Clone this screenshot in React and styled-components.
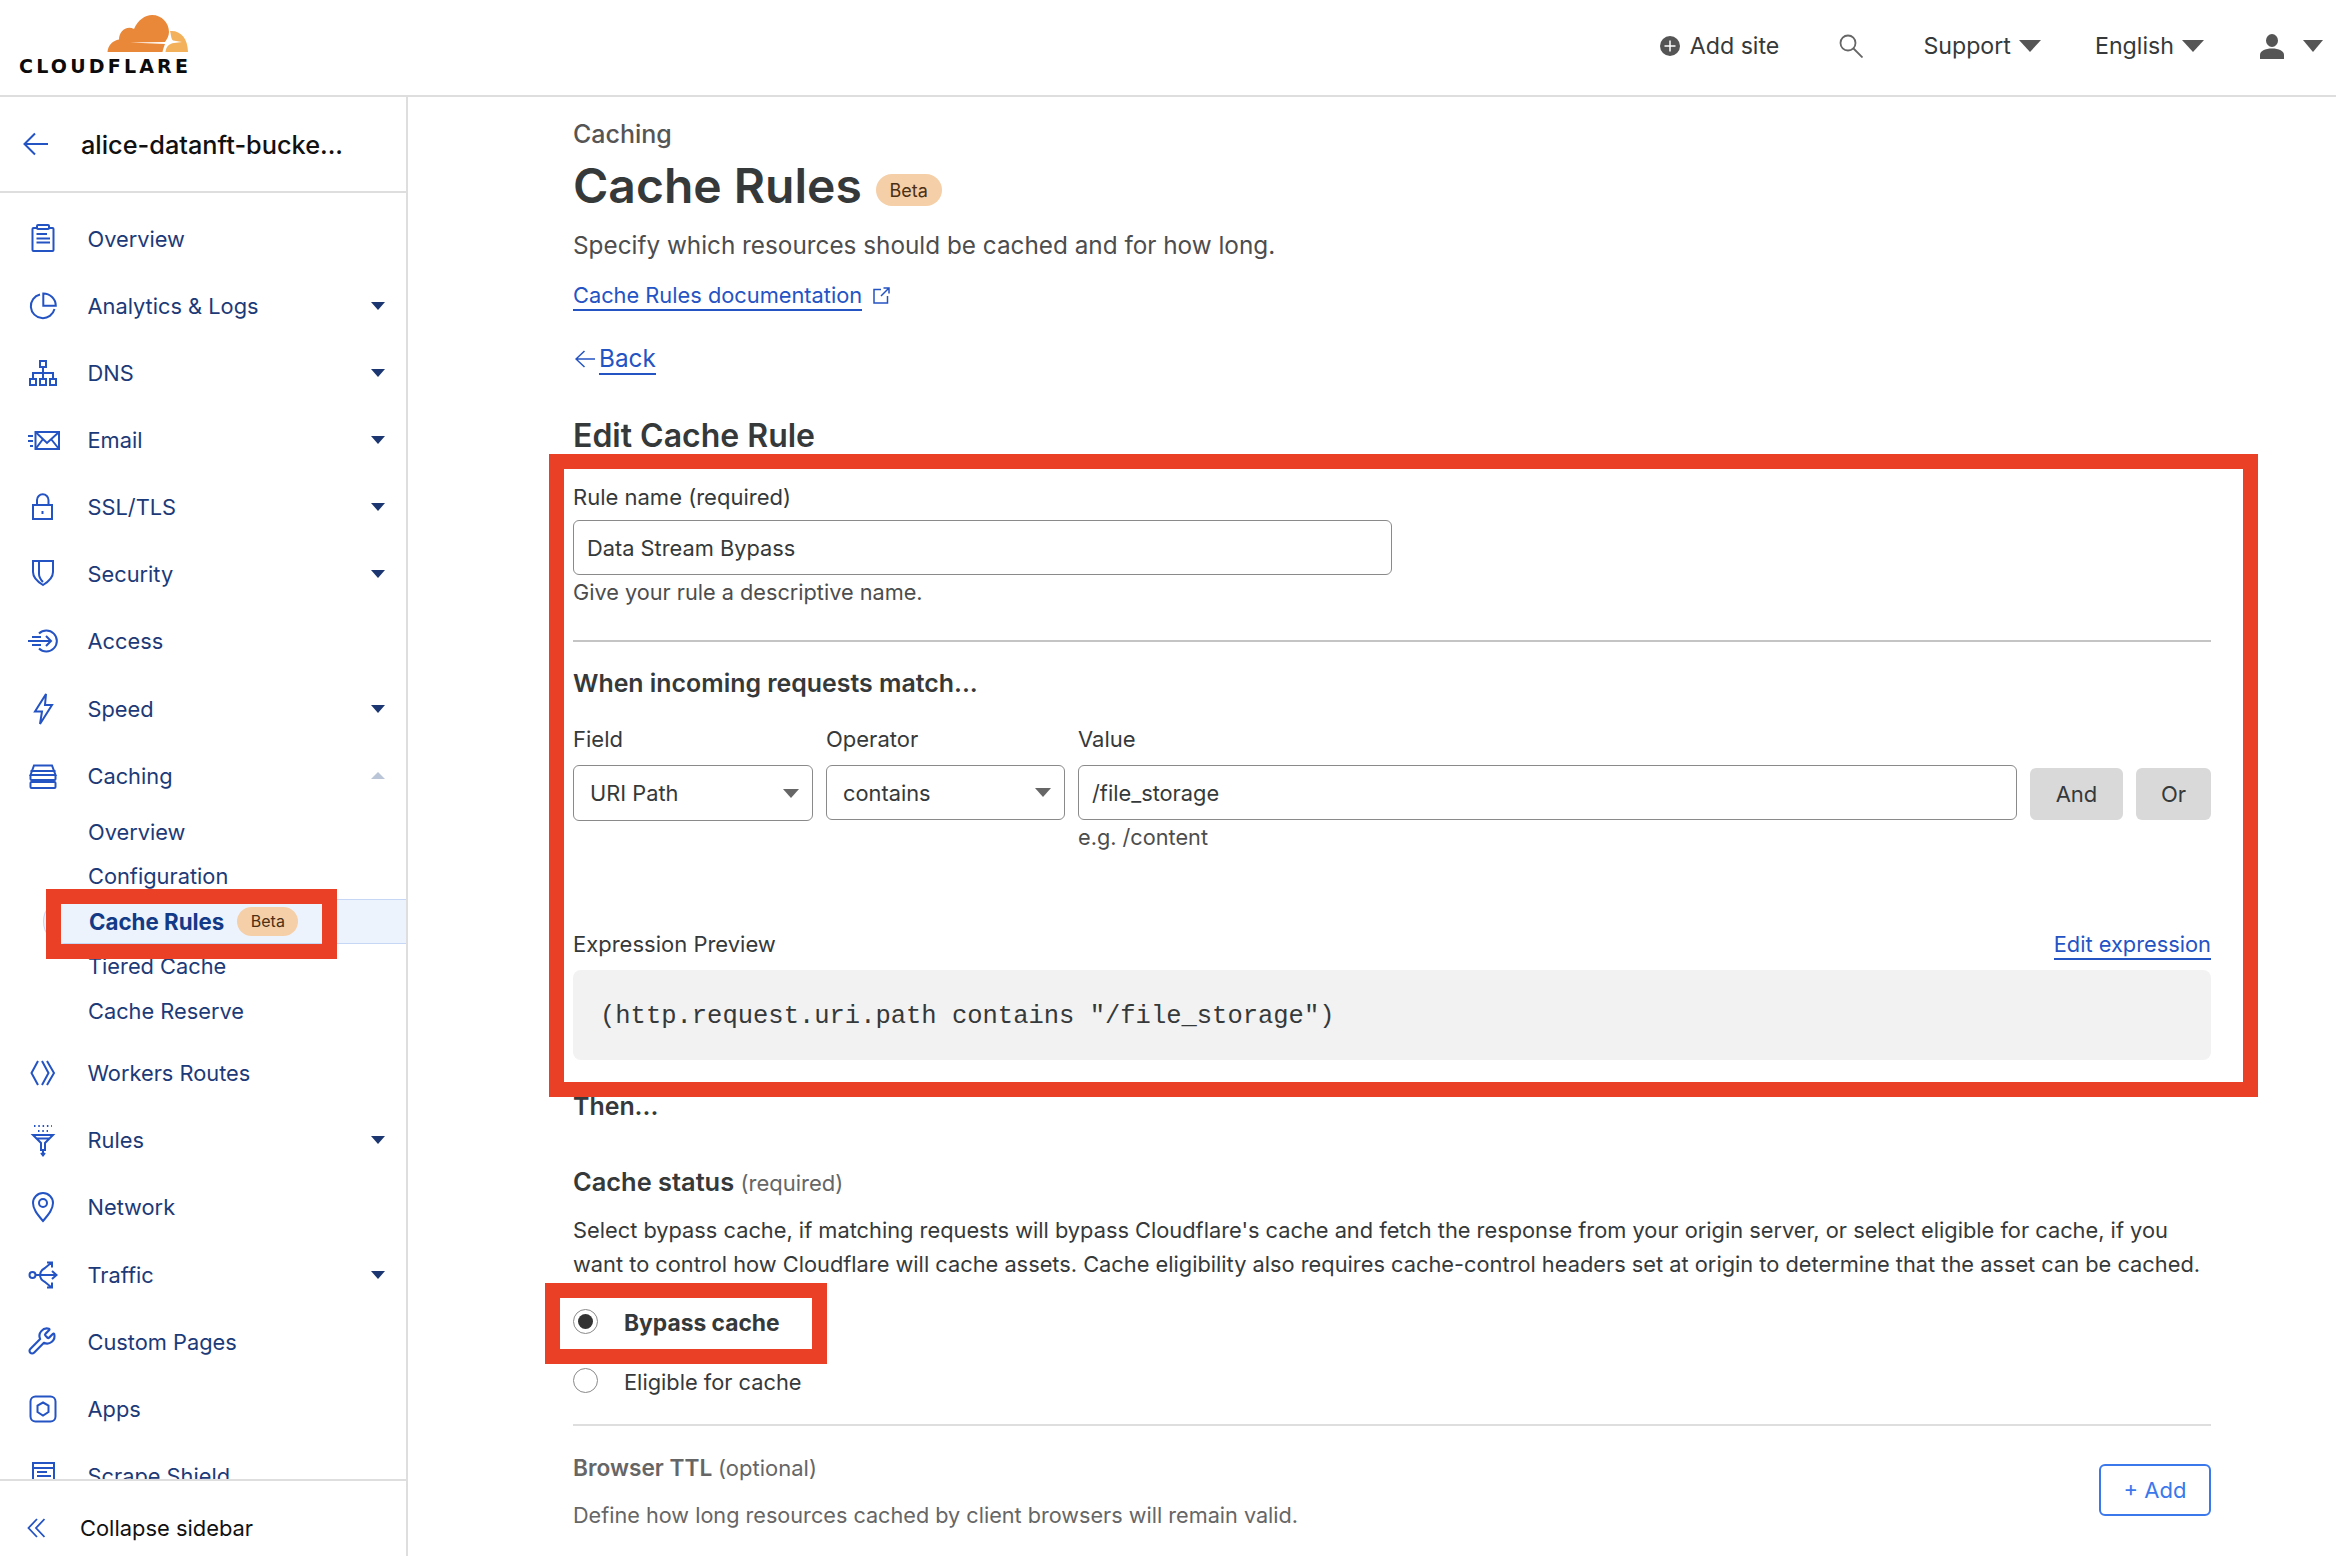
import React from "react";
import styled, { createGlobalStyle } from "styled-components";
import { Wrench } from "lucide-react";

const GlobalStyle = createGlobalStyle`
  * { box-sizing: border-box; }
  html, body { margin: 0; padding: 0; background: #fff; }
  body {
    font-family: Inter, "Noto Sans", sans-serif;
    color: #36393a;
    overflow: hidden;
  }
`;

const Page = styled.div`
  position: relative;
  width: 2336px;
  height: 1556px;
  overflow: hidden;
`;

/* top bar */
const TopBar = styled.header`
  height: 97px;
  display: flex;
  align-items: center;
  justify-content: space-between;
  border-bottom: 2px solid #dedede;
  padding: 0 13px 0 19px;
`;

const Logo = styled.div`
  width: 170px;
  display: flex;
  flex-direction: column;
  align-items: flex-end;
  margin-top: -5px;
`;

const LogoText = styled.span`
  font-family: "DejaVu Sans", sans-serif;
  font-weight: 700;
  font-size: 19px;
  line-height: 18px;
  letter-spacing: 3.2px;
  color: #0b0b0b;
  margin-top: 4px;
  white-space: nowrap;
  align-self: flex-start;
`;

const TopActions = styled.div`
  display: flex;
  align-items: center;
  font-size: 23.2px;
  color: #36393a;
  margin-top: -3px;
`;

const TopItem = styled.div`
  display: flex;
  align-items: center;
  gap: ${p => p.$gap || 8}px;
  margin-left: ${p => p.$left || 0}px;
`;

const Caret = styled.span`
  display: inline-block;
  width: 0;
  height: 0;
  flex: none;
  border-left: ${p => p.$w / 2}px solid transparent;
  border-right: ${p => p.$w / 2}px solid transparent;
  border-top: ${p => (p.$up ? 0 : p.$h + "px solid " + p.$color)};
  border-bottom: ${p => (p.$up ? p.$h + "px solid " + p.$color : 0)};
`;

/* layout */
const Body = styled.div`
  display: flex;
  height: 1459px;
`;

const Sidebar = styled.aside`
  width: 408px;
  flex: none;
  display: flex;
  flex-direction: column;
  border-right: 2px solid #dedede;
`;

const SiteRow = styled.div`
  height: 96px;
  flex: none;
  display: flex;
  align-items: center;
  gap: 32px;
  padding-left: 23px;
  border-bottom: 2px solid #dedede;
  font-size: 25.3px;
  font-weight: 500;
  color: #111;
`;

const Nav = styled.nav`
  flex: 1;
  min-height: 0;
  overflow: hidden;
  padding-top: 12px;
`;

const NavRow = styled.div`
  height: 67.15px;
  display: flex;
  align-items: center;
  padding: 0 21px 0 27px;
  margin-top: ${p => p.$top || 0}px;
  color: #1d3a78;
  font-size: 21.8px;
`;

const IconSlot = styled.span`
  width: 32px;
  height: 32px;
  flex: none;
  margin-right: 28.500px;
  color: #2453c4;
  display: flex;
  svg { overflow: visible; display: block; }
`;

const NavLabel = styled.span`
  flex: 1;
`;

const SubRow = styled.div`
  height: 44.8px;
  display: flex;
  align-items: center;
  padding-left: 88px;
  color: #1d3a78;
  font-size: 21.8px;
`;

const ActiveSubRow = styled(SubRow)`
  margin-left: 43px;
  padding-left: 45px;
  gap: 13px;
  font-size: 22.3px;
  font-weight: 700;
  color: #123a86;
  background: #edf3fd;
  border: 1px solid #c6d7f5;
  border-right: 0;
  border-radius: 22px 0 0 22px;
`;

const CollapseRow = styled.div`
  height: 77px;
  flex: none;
  display: flex;
  align-items: center;
  gap: 35px;
  padding: 19px 0 0 27px;
  border-top: 2px solid #dedede;
  font-size: 21.9px;
  color: #111;
`;

const Badge = styled.span`
  display: inline-flex;
  align-items: center;
  justify-content: center;
  background: #f5cfa8;
  color: #4c3016;
  border-radius: 16px;
  font-weight: 400;
  width: ${p => p.$w}px;
  height: ${p => p.$h}px;
  font-size: ${p => p.$size}px;
`;

/* main column */
const Main = styled.main`
  flex: 1;
  min-width: 0;
  padding: 21px 125px 0 165px;
`;

const Crumb = styled.div`
  font-size: 25px;
  line-height: 32px;
  font-weight: 500;
  color: #555;
`;

const TitleRow = styled.div`
  height: 60px;
  margin-top: 5px;
  display: flex;
  align-items: center;
  gap: 14px;
`;

const Title = styled.h1`
  margin: 1px 0 0;
  font-size: 48px;
  line-height: 60px;
  font-weight: 600;
  color: #36393a;
`;

const TitleBadge = styled(Badge)`
  margin-top: 10px;
`;

const Lead = styled.p`
  margin: 12px 0 0;
  font-size: 24.3px;
  line-height: 36px;
  color: #4d4d4d;
`;

const DocRow = styled.div`
  margin-top: 18px;
  height: 31px;
  display: flex;
  align-items: flex-start;
  gap: 11px;
  color: #2453c4;
`;

const TextLink = styled.a`
  display: inline-block;
  color: #2453c4;
  text-decoration: none;
  border-bottom: 2px solid #2453c4;
  font-size: 21.8px;
  line-height: 28px;
`;

const BackRow = styled.div`
  margin-top: 31px;
  height: 32px;
  display: flex;
  align-items: flex-start;
  gap: 4px;
  color: #2453c4;
  padding-left: 2px;
  svg { margin-top: 7px; }
`;

const BackLink = styled(TextLink)`
  font-size: 24.3px;
  line-height: 30px;
`;

const SectionTitle = styled.h2`
  margin: 41px 0 0;
  font-size: 32px;
  line-height: 40px;
  font-weight: 600;
  color: #36393a;
`;

const FieldLabel = styled.div`
  font-size: 22px;
  line-height: 28px;
  color: #36393a;
`;

const RuleLabel = styled(FieldLabel)`
  margin-top: 27px;
`;

const TextBox = styled.div`
  display: flex;
  align-items: center;
  border: 1.5px solid #8a8a8a;
  border-radius: 6px;
  background: #fff;
  font-size: 21.8px;
  color: #36393a;
  padding: 0 13px;
  height: ${p => p.$h || 55}px;
`;

const RuleInput = styled(TextBox)`
  width: 819px;
  margin-top: 9px;
`;

const Hint = styled.div`
  margin-top: 3px;
  font-size: 21.7px;
  line-height: 28px;
  color: #4d4d4d;
`;

const Divider = styled.hr`
  margin: ${p => p.$top}px 0 0;
  border: 0;
  height: 2px;
  background: ${p => p.$color || "#dedede"};
`;

const SubHeading = styled.h3`
  margin: ${p => p.$top}px 0 0;
  font-size: 24.9px;
  line-height: 32px;
  font-weight: 600;
  color: #36393a;
`;

const MatchGrid = styled.div`
  margin-top: 26px;
  display: grid;
  grid-template-columns: 240px 239px 939px 93px 75px;
  column-gap: 13px;
  align-items: start;
`;

const MatchCell = styled.div`
  display: flex;
  flex-direction: column;
  gap: 12px;
`;

const ButtonCell = styled.div`
  padding-top: 43px;
`;

const SelectBox = styled(TextBox)`
  justify-content: space-between;
  padding: 0 13px 0 16px;
`;

const ValueHint = styled(Hint)`
  margin-top: -9px;
`;

const GrayButton = styled.button`
  width: 100%;
  height: 52px;
  border: 0;
  border-radius: 6px;
  background: #d9d9d9;
  color: #36393a;
  font-family: inherit;
  font-size: 22px;
`;

const PreviewHead = styled.div`
  margin-top: 79px;
  display: flex;
  justify-content: space-between;
  align-items: flex-start;
`;

const CodeBlock = styled.pre`
  margin: 10px 0 0;
  height: 90px;
  display: flex;
  align-items: center;
  padding: 3px 0 0 27px;
  background: #f2f2f2;
  border-radius: 8px;
  font-family: "Liberation Mono", monospace;
  font-size: 25.5px;
  color: #36393a;
`;

const StatusTitle = styled.div`
  margin-top: 44px;
  line-height: 32px;
  font-size: 25.4px;
  font-weight: 600;
  color: #36393a;
  small {
    font-size: 22px;
    font-weight: 400;
    color: #666;
  }
`;

const Para = styled.p`
  margin: 14px 0 0;
  font-size: 21.8px;
  line-height: 34px;
  white-space: nowrap;
  color: #36393a;
`;

const RadioRow = styled.label`
  height: 25px;
  margin-top: ${p => p.$top}px;
  display: flex;
  align-items: center;
  gap: 26px;
  font-size: ${p => (p.$on ? 22.8 : 21.8)}px;
  font-weight: ${p => (p.$on ? 700 : 400)};
  color: #36393a;
`;

const RadioDot = styled.span`
  width: 25px;
  height: 25px;
  flex: none;
  border-radius: 50%;
  border: 1.5px solid #8a8a8a;
  display: flex;
  align-items: center;
  justify-content: center;
  &::after {
    content: "";
    width: 15px;
    height: 15px;
    border-radius: 50%;
    background: ${p => (p.$on ? "#333" : "transparent")};
  }
`;

const RadioText = styled.span`
  margin-top: 2px;
`;

const TtlRow = styled.div`
  margin-top: 28px;
  display: flex;
  justify-content: space-between;
  align-items: flex-start;
`;

const TtlTitle = styled.div`
  font-size: 22.7px;
  line-height: 28px;
  font-weight: 600;
  color: #666;
  small {
    font-size: 22px;
    font-weight: 400;
  }
`;

const TtlText = styled.div`
  margin-top: 19px;
  font-size: 21.65px;
  line-height: 28px;
  color: #666;
`;

const OutlineButton = styled.button`
  width: 112px;
  height: 52px;
  margin-top: 10px;
  background: #fff;
  border: 2px solid #3a78ec;
  border-radius: 6px;
  color: #3a78ec;
  font-family: inherit;
  font-size: 22px;
`;

/* red annotation frames drawn over the page */
const Highlight = styled.div`
  position: absolute;
  left: ${p => p.$x}px;
  top: ${p => p.$y}px;
  width: ${p => p.$w}px;
  height: ${p => p.$h}px;
  border: 15px solid #ea4026;
  pointer-events: none;
`;

const CloudLogo = () => (
  <svg width="82" height="38" viewBox="106 14 82 38">
    <path
      fill="#ea883a"
      d="M106.500 51C107 44 112 39.500 118 38.500C118 31 125 24 133 28C137 19 144 14 151 14C161 14 168 22 168 31C168 35 166 38 164 41L129 41.500L164 43C163 46 162 48 161.500 51Z"
    />
    <path
      fill="#f3b15c"
      d="M164.500 51C165 46 168 42.500 173 42L181 41L172 39.500C170 38 170 33 169 30C179 29 187 37 187 51Z"
    />
  </svg>
);

const iconPaths = {
  overview: (
    <>
      <rect x="5.500" y="5" width="21" height="23" rx="1" />
      <rect x="10" y="2" width="12" height="4" rx="1" fill="#fff" />
      <path d="M9.500 11H20M9.500 15.500H23M9.500 19.500H23" />
    </>
  ),
  analytics: (
    <>
      <path d="M13 4.500A12 12 0 1 0 27.500 19" />
      <path d="M16.300 3.500A12.500 12.500 0 0 1 28.800 15.700H16.300Z" />
    </>
  ),
  dns: (
    <>
      <rect x="13" y="4" width="6" height="6" />
      <path d="M16 10V22M6 22V16H26V22" />
      <rect x="3" y="22" width="6" height="6" />
      <rect x="13" y="22" width="6" height="6" />
      <rect x="23" y="22" width="6" height="6" />
    </>
  ),
  email: (
    <>
      <rect x="8.500" y="8" width="23.500" height="17" />
      <path d="M8.500 8L20 19L32 8M8.500 25L16 15M32 25L24 15M1 12H6M1 17H6M3 22H6" />
    </>
  ),
  lock: (
    <>
      <rect x="6" y="14" width="19" height="14" />
      <path d="M10 14V9A5.700 5.700 0 0 1 21.500 9V14M15.500 20V23" />
    </>
  ),
  shield: (
    <>
      <path d="M6 3H26V14C26 20 21 24 16 27C11 24 6 20 6 14Z" />
      <path d="M12 3V16C12 20 14 22 16 24" />
    </>
  ),
  access: (
    <>
      <path d="M12 8.500A10.500 10.500 0 1 1 12 23.500" />
      <path d="M1 16H24M19 11L24 16L19 21M5 12H14M5 20H14" />
    </>
  ),
  speed: <path d="M19 1L8 18.500H15L13 31L25 12H18Z" />,
  caching: (
    <>
      <path d="M3.500 15L7 5.500H25L28.500 15Z" />
      <path d="M3.500 11H28.500" />
      <rect x="3.500" y="15" width="25" height="5" rx="1" />
      <rect x="3.500" y="22" width="25" height="6" rx="1" />
    </>
  ),
  workers: <path d="M11 4L4.500 16L11 28M15 4L21.500 16L15 28M20 4L27 16L20 28" />,
  rules: (
    <>
      <path d="M7 2H25M11 7H21" strokeDasharray="1.500 2.800" />
      <path d="M6 11H26L18 19V26H14V19ZM10 14.500H22M16 26V31M14 29L16 31.500L18 29" />
    </>
  ),
  network: (
    <>
      <path d="M16 30C10 23 6 18 6 12A10 10 0 0 1 26 12C26 18 22 23 16 30Z" />
      <circle cx="16" cy="12" r="4" />
    </>
  ),
  traffic: (
    <>
      <circle cx="5.500" cy="16" r="3" />
      <path d="M8.500 16H29M25 12L29.500 16L25 20M13 16C13 12 16 10 18 9L24 4M20 3.500H25V8.500M13 16C13 20 16 22 18 23L24 28M20 28.500H25V23.500" />
    </>
  ),
  apps: (
    <>
      <rect x="3.500" y="3.500" width="25" height="25" rx="5" />
      <path d="M16 9.500L21.500 12.500V19L16 22.500L10.500 19V12.500Z" />
    </>
  ),
  scrape: (
    <>
      <rect x="6" y="3" width="21" height="26" />
      <path d="M6 8H27M10 12H20M10 16H24M10 20H24" />
    </>
  ),
};

const NavIcon = ({ name }) => (
  <IconSlot>
    {name === "wrench" ? (
      <Wrench size={30} strokeWidth={1.7} />
    ) : (
      <svg width="32" height="32" viewBox="0 0 32 32" fill="none" stroke="currentColor" strokeWidth="2">
        {iconPaths[name]}
      </svg>
    )}
  </IconSlot>
);

const NavItem = ({ icon, label, caret, up, top }) => (
  <NavRow $top={top}>
    <NavIcon name={icon} />
    <NavLabel>{label}</NavLabel>
    {caret && <Caret $w={14} $h={up ? 7 : 8} $up={up} $color={up ? "#bac5d8" : "#1b3670"} />}
  </NavRow>
);

const navTop = [
  { icon: "overview", label: "Overview" },
  { icon: "analytics", label: "Analytics & Logs", caret: true },
  { icon: "dns", label: "DNS", caret: true },
  { icon: "email", label: "Email", caret: true },
  { icon: "lock", label: "SSL/TLS", caret: true },
  { icon: "shield", label: "Security", caret: true },
  { icon: "access", label: "Access" },
  { icon: "speed", label: "Speed", caret: true },
  { icon: "caching", label: "Caching", caret: true, up: true },
];

const navBottom = [
  { icon: "rules", label: "Rules", caret: true },
  { icon: "network", label: "Network" },
  { icon: "traffic", label: "Traffic", caret: true },
  { icon: "wrench", label: "Custom Pages" },
  { icon: "apps", label: "Apps" },
  { icon: "scrape", label: "Scrape Shield" },
];

const App = () => (
  <Page>
    <GlobalStyle />
    <TopBar>
      <Logo>
        <CloudLogo />
        <LogoText>CLOUDFLARE</LogoText>
      </Logo>
      <TopActions>
        <TopItem $gap={10}>
          <svg width="20" height="20" viewBox="0 0 20 20">
            <circle cx="10" cy="10" r="10" fill="#555" />
            <path d="M10 4.500V15.500M4.500 10H15.500" stroke="#fff" strokeWidth="1.500" />
          </svg>
          Add site
        </TopItem>
        <TopItem $left={60}>
          <svg width="24" height="24" viewBox="0 0 24 24" fill="none" stroke="#666" strokeWidth="1.800">
            <circle cx="9" cy="9" r="7.500" />
            <path d="M14.500 14.500L23.500 23.500" />
          </svg>
        </TopItem>
        <TopItem $left={60}>
          Support
          <Caret $w={23} $h={12} $color="#555" />
        </TopItem>
        <TopItem $left={54}>
          English
          <Caret $w={22} $h={12} $color="#555" />
        </TopItem>
        <TopItem $left={56} $gap={19}>
          <svg width="24" height="25" viewBox="0 0 24 25" fill="#555">
            <ellipse cx="12" cy="6.500" rx="6" ry="6.500" />
            <path d="M0 25V21C0 17 5 14.500 12 14.500C19 14.500 24 17 24 21V25Z" />
          </svg>
          <Caret $w={21} $h={12} $color="#555" />
        </TopItem>
      </TopActions>
    </TopBar>

    <Body>
      <Sidebar>
        <SiteRow>
          <svg width="26" height="24" viewBox="0 0 26 24" fill="none" stroke="#2453c4" strokeWidth="2">
            <path d="M25 12H2M12 1.500L1.500 12L12 22.500" />
          </svg>
          alice-datanft-bucke...
        </SiteRow>
        <Nav>
          {navTop.map(item => (
            <NavItem key={item.label} {...item} />
          ))}
          <SubRow>Overview</SubRow>
          <SubRow>Configuration</SubRow>
          <ActiveSubRow>
            Cache Rules
            <Badge $w={61} $h={29} $size={16}>
              Beta
            </Badge>
          </ActiveSubRow>
          <SubRow>Tiered Cache</SubRow>
          <SubRow>Cache Reserve</SubRow>
          <NavItem icon="workers" label="Workers Routes" top={6.4} />
          {navBottom.map(item => (
            <NavItem key={item.label} {...item} />
          ))}
        </Nav>
        <CollapseRow>
          <svg width="18" height="20" viewBox="0 0 18 20" fill="none" stroke="#2453c4" strokeWidth="1.800">
            <path d="M10 1L1.500 10L10 19M17.500 1L9 10L17.500 19" />
          </svg>
          Collapse sidebar
        </CollapseRow>
      </Sidebar>

      <Main>
        <Crumb>Caching</Crumb>
        <TitleRow>
          <Title>Cache Rules</Title>
          <TitleBadge $w={66} $h={32} $size={18}>
            Beta
          </TitleBadge>
        </TitleRow>
        <Lead>Specify which resources should be cached and for how long.</Lead>
        <DocRow>
          <TextLink href="#">Cache Rules documentation</TextLink>
          <svg width="17" height="17" viewBox="0 0 17 17" fill="none" stroke="currentColor" strokeWidth="1.500" style={{ marginTop: 6 }}>
            <path d="M8 2.500H1V16H14.500V9M10.500 1H16V6.500M16 1L8 9" />
          </svg>
        </DocRow>
        <BackRow>
          <svg width="20" height="18" viewBox="0 0 20 18" fill="none" stroke="currentColor" strokeWidth="1.500">
            <path d="M20 9H1.500M9.500 1L1 9L9.500 17" />
          </svg>
          <BackLink href="#">Back</BackLink>
        </BackRow>

        <SectionTitle>Edit Cache Rule</SectionTitle>
        <RuleLabel>Rule name (required)</RuleLabel>
        <RuleInput>Data Stream Bypass</RuleInput>
        <Hint>Give your rule a descriptive name.</Hint>
        <Divider $top={34} $color="#c4c4c4" />

        <SubHeading $top={25}>When incoming requests match...</SubHeading>
        <MatchGrid>
          <MatchCell>
            <FieldLabel>Field</FieldLabel>
            <SelectBox $h={56}>
              URI Path
              <Caret $w={16} $h={9} $color="#666" />
            </SelectBox>
          </MatchCell>
          <MatchCell>
            <FieldLabel>Operator</FieldLabel>
            <SelectBox>
              contains
              <Caret $w={16} $h={9} $color="#666" />
            </SelectBox>
          </MatchCell>
          <MatchCell>
            <FieldLabel>Value</FieldLabel>
            <TextBox>/file_storage</TextBox>
            <ValueHint>e.g. /content</ValueHint>
          </MatchCell>
          <ButtonCell>
            <GrayButton>And</GrayButton>
          </ButtonCell>
          <ButtonCell>
            <GrayButton>Or</GrayButton>
          </ButtonCell>
        </MatchGrid>

        <PreviewHead>
          <FieldLabel>Expression Preview</FieldLabel>
          <TextLink href="#">Edit expression</TextLink>
        </PreviewHead>
        <CodeBlock>(http.request.uri.path contains "/file_storage")</CodeBlock>

        <SubHeading $top={30}>Then...</SubHeading>
        <StatusTitle>
          Cache status <small>(required)</small>
        </StatusTitle>
        <Para>
          Select bypass cache, if matching requests will bypass Cloudflare's cache and fetch the response from your origin server, or select eligible for cache, if you
          <br />
          want to control how Cloudflare will cache assets. Cache eligibility also requires cache-control headers set at origin to determine that the asset can be cached.
        </Para>
        <RadioRow $top={28} $on>
          <RadioDot $on />
          <RadioText>Bypass cache</RadioText>
        </RadioRow>
        <RadioRow $top={34}>
          <RadioDot />
          <RadioText>Eligible for cache</RadioText>
        </RadioRow>
        <Divider $top={31} />
        <TtlRow>
          <div>
            <TtlTitle>
              Browser TTL <small>(optional)</small>
            </TtlTitle>
            <TtlText>Define how long resources cached by client browsers will remain valid.</TtlText>
          </div>
          <OutlineButton>+ Add</OutlineButton>
        </TtlRow>
      </Main>
    </Body>

    <Highlight $x={46} $y={889} $w={291} $h={70} />
    <Highlight $x={549} $y={454} $w={1709} $h={643} />
    <Highlight $x={545} $y={1283} $w={282} $h={81} />
  </Page>
);

export default App;
